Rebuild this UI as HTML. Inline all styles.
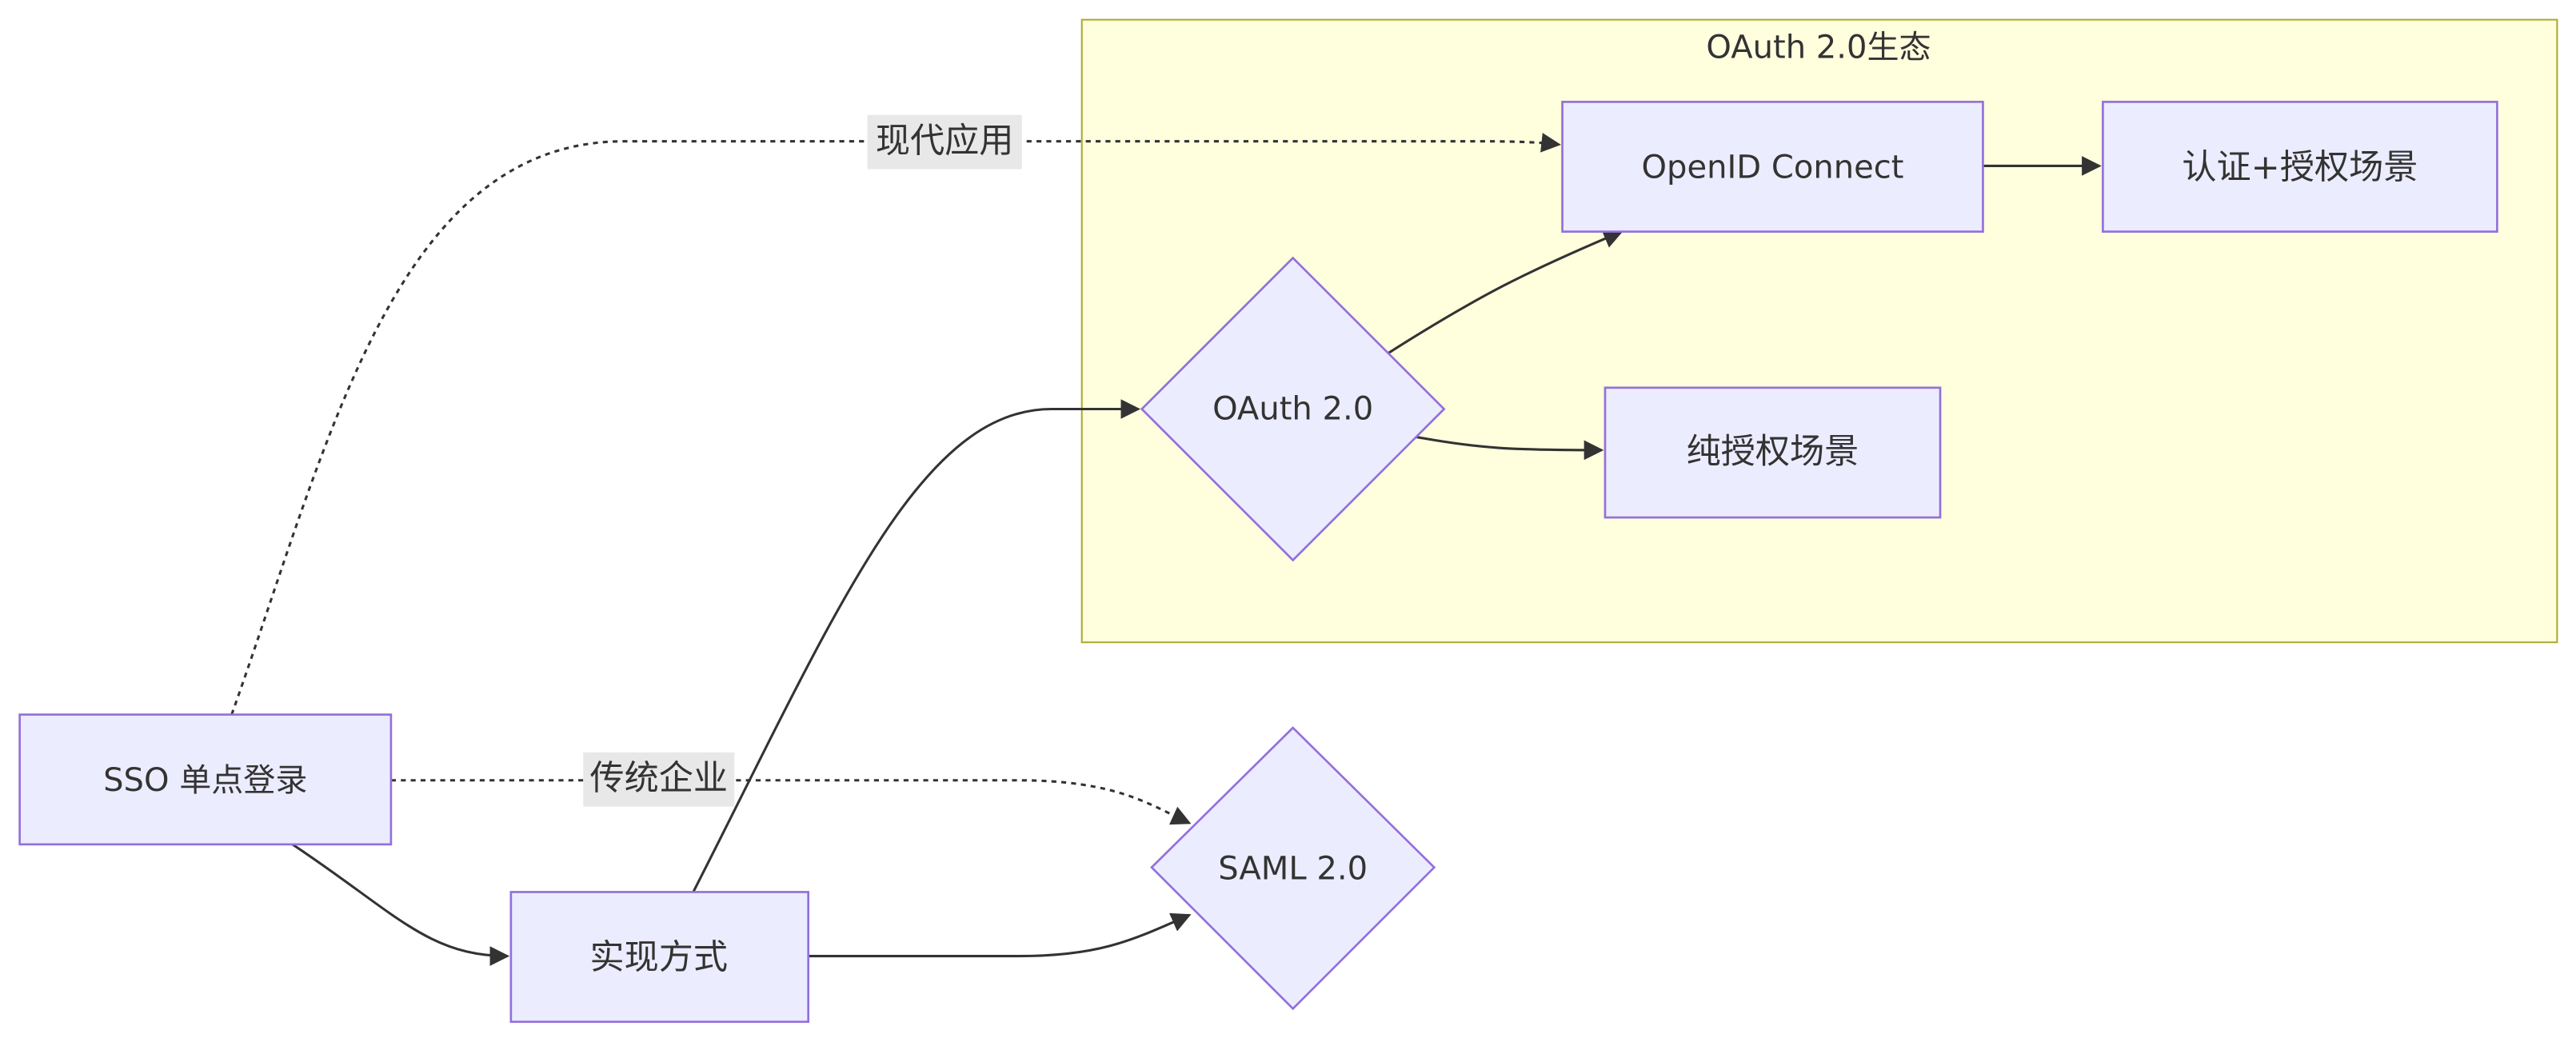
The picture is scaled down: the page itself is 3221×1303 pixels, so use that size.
<!DOCTYPE html>
<html><head><meta charset="utf-8"><style>html,body{margin:0;padding:0;background:#fff;}svg{display:block}
text{font-family:"DejaVu Sans","Noto Sans CJK SC",sans-serif;fill:#333;font-size:19.5px;text-anchor:middle;dominant-baseline:central}
.c{font-size:21px}</style></head>
<body>
<svg width="3221" height="1303" viewBox="0 0 1568 634.3" preserveAspectRatio="none" xmlns="http://www.w3.org/2000/svg">
<defs><marker id="a" viewBox="0 0 10 10" refX="9" refY="5" markerWidth="8" markerHeight="8" orient="auto"><path d="M0 0L10 5L0 10z" fill="#333"/></marker></defs>
<rect x="658.5" y="12" width="898" height="379" fill="#ffffde" stroke="#aaaa33" stroke-width="1"/>
<text x="1107" y="29">OAuth 2.0生态</text>
<g fill="none" stroke="#333" stroke-width="1.5">
<path d="M141 435 C200 270 240 86 380 86 L900 86 C930 86 940 87 949 88" stroke-dasharray="3 3" marker-end="url(#a)"/>
<path d="M238 475 L620 475 C680 475 700 490 724 501" stroke-dasharray="3 3" marker-end="url(#a)"/>
<path d="M178 514 C240 555 260 582 309 582" marker-end="url(#a)"/>
<path d="M422 543 C510 370 560 249 640 249 L693 249" marker-end="url(#a)"/>
<path d="M492 582 L620 582 C670 582 690 572 724 557" marker-end="url(#a)"/>
<path d="M845 215 C900 180 930 165 987 141" marker-end="url(#a)"/>
<path d="M862 266 C900 273 920 274 975 274" marker-end="url(#a)"/>
<path d="M1207 101 L1278 101" marker-end="url(#a)"/>
</g>
<rect x="528" y="70" width="94" height="33" fill="#e8e8e8"/><text class="c" x="575" y="86">现代应用</text>
<rect x="355" y="458" width="92" height="33" fill="#e8e8e8"/><text class="c" x="401" y="474">传统企业</text>
<g fill="#ececff" stroke="#9370db" stroke-width="1.3">
<rect x="951" y="62" width="256" height="79"/>
<rect x="1280" y="62" width="240" height="79"/>
<rect x="977" y="236" width="204" height="79"/>
<rect x="12" y="435" width="226" height="79"/>
<rect x="311" y="543" width="181" height="79"/>
<path d="M787 157 L879 249 L787 341 L695 249Z"/>
<path d="M787 443 L873 528 L787 614 L701 528Z"/>
</g>
<text x="1079" y="102">OpenID Connect</text>
<text class="c" x="1400" y="102">认证+授权场景</text>
<text class="c" x="1079" y="275">纯授权场景</text>
<text x="125" y="475">SSO 单点登录</text>
<text class="c" x="401" y="583">实现方式</text>
<text x="787" y="249">OAuth 2.0</text>
<text x="787" y="529">SAML 2.0</text>
</svg>
</body></html>
